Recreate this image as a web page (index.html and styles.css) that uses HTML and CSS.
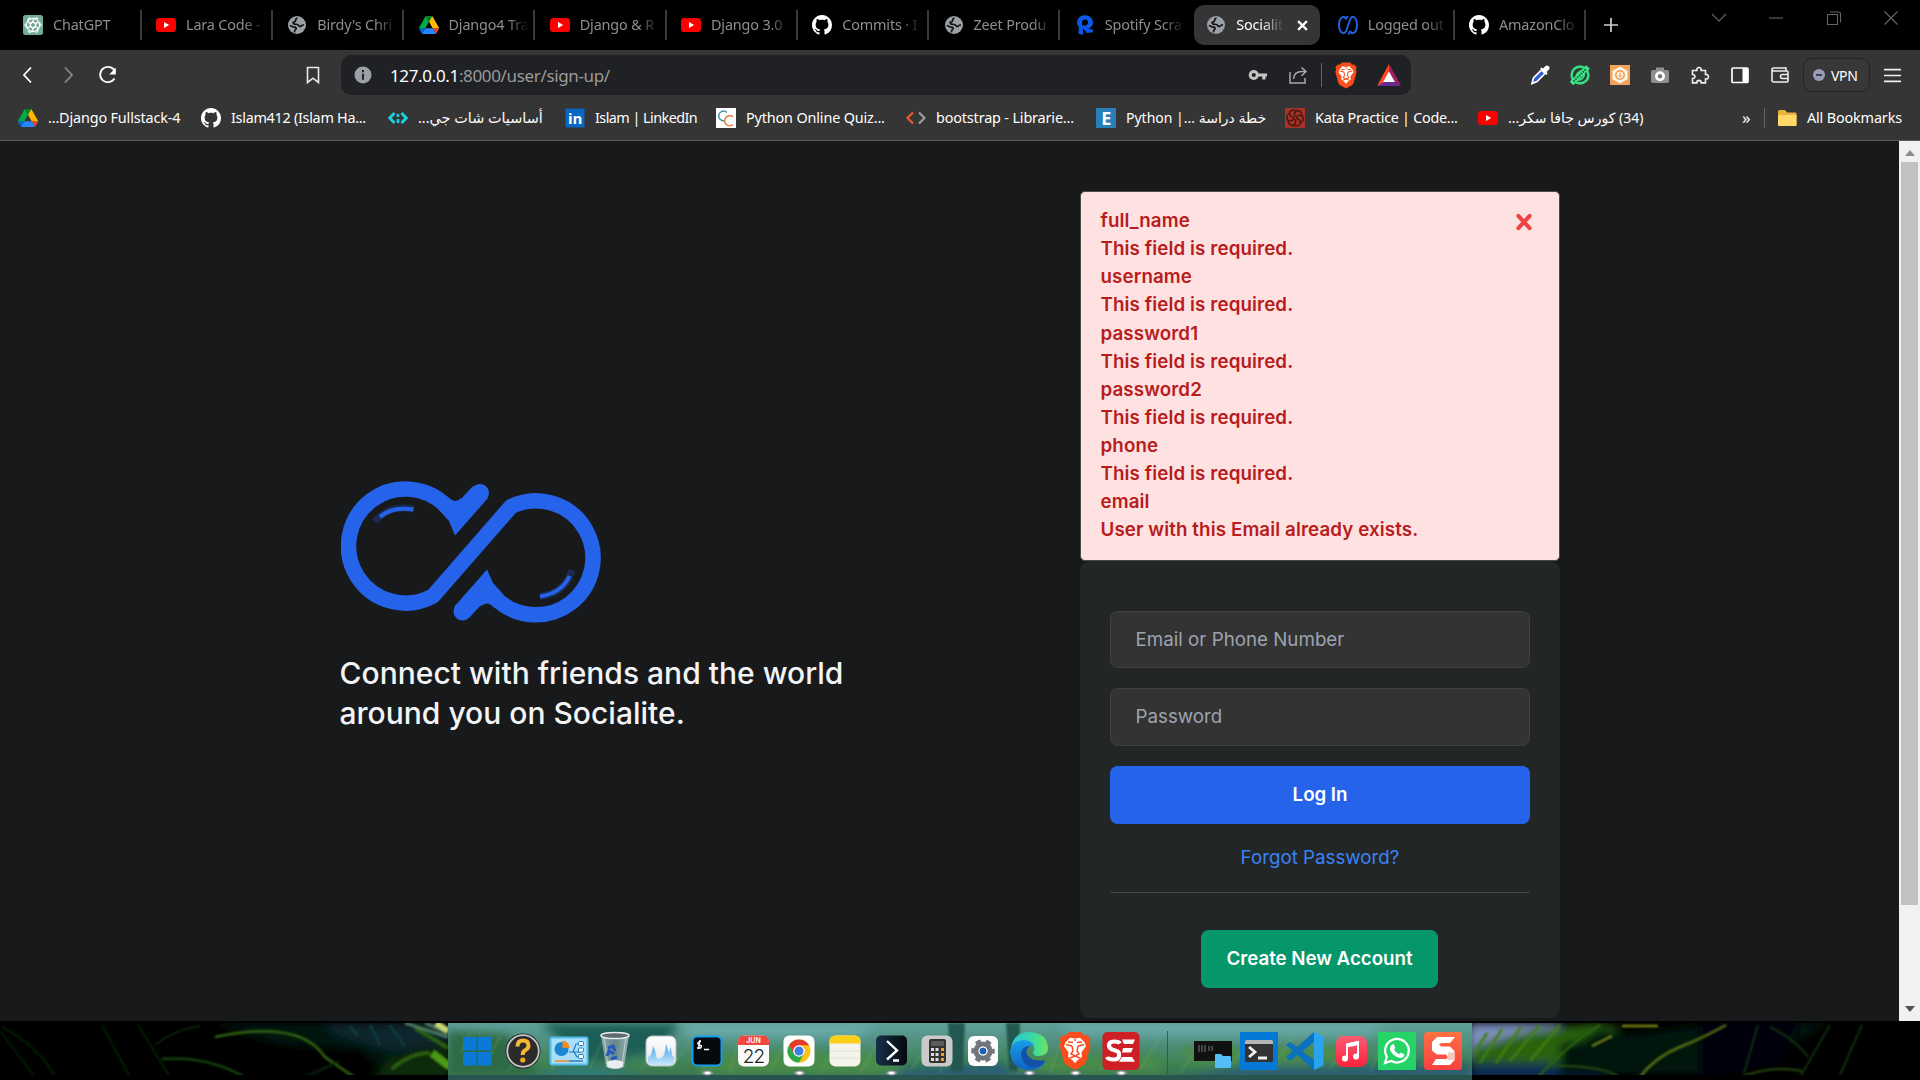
FILE: index.html
```html
<!DOCTYPE html>
<html lang="en">
<head>
<meta charset="utf-8">
<title>Socialite</title>
<link rel="stylesheet" href="styles.css">
</head>
<body>
<svg class="defs" aria-hidden="true">
  <defs>
    <linearGradient id="edgeA" x1="0" y1="0" x2="1" y2="0"><stop offset="0" stop-color="#2bc6d8"/><stop offset=".6" stop-color="#3ad9a4"/><stop offset="1" stop-color="#6ee65a"/></linearGradient>
    <linearGradient id="edgeB" x1="0" y1="0" x2="0" y2="1"><stop offset="0" stop-color="#1aa0e8"/><stop offset="1" stop-color="#0f62c4"/></linearGradient>
    <linearGradient id="musicG" x1="0" y1="0" x2="0" y2="1"><stop offset="0" stop-color="#fb5c74"/><stop offset="1" stop-color="#fa233b"/></linearGradient>
    <linearGradient id="snagG" x1="0" y1="0" x2="0" y2="1"><stop offset="0" stop-color="#ff7043"/><stop offset="1" stop-color="#f9403f"/></linearGradient>
    <linearGradient id="psG" x1="0" y1="0" x2="1" y2="0"><stop offset="0" stop-color="#16304a"/><stop offset="1" stop-color="#05090f"/></linearGradient>
    <linearGradient id="binG" x1="0" y1="0" x2="1" y2="0"><stop offset="0" stop-color="#b8c4c8"/><stop offset=".5" stop-color="#7d939c"/><stop offset="1" stop-color="#c3ced2"/></linearGradient>
    <linearGradient id="lightG" x1="0" y1="0" x2="0" y2="1"><stop offset="0" stop-color="#fff"/><stop offset="1" stop-color="#dfe3e6"/></linearGradient>
    <linearGradient id="waveG" x1="0" y1="0" x2="0" y2="1"><stop offset="0" stop-color="#3ea4ec"/><stop offset="1" stop-color="#c9e6fa"/></linearGradient>
  </defs>
  <symbol id="i-gpt" viewBox="0 0 20 20"><rect width="20" height="20" rx="2.5" fill="#74aa9c"/><g fill="none" stroke="#fff" stroke-width="1.15"><path id="petal" d="M10 7.1 12.6 8.6V12.4M10 7.1V5.3a3 3 0 0 1 5.2-1.4"/><use href="#petal" transform="rotate(60 10 10)"/><use href="#petal" transform="rotate(120 10 10)"/><use href="#petal" transform="rotate(180 10 10)"/><use href="#petal" transform="rotate(240 10 10)"/><use href="#petal" transform="rotate(300 10 10)"/><circle cx="10" cy="10" r="6.6"/></g></symbol>
  <symbol id="i-yt" viewBox="0 0 20 20"><rect y="3" width="20" height="14" rx="3.6" fill="#f00"/><path d="M8 7l5.2 3L8 13z" fill="#fff"/></symbol>
  <symbol id="i-globe" viewBox="0 0 20 20"><circle cx="10" cy="10" r="9" fill="#9aa0a6"/><path d="M10.500 3q-2 .5-1.800 2.300-.2 1.700-2.500 2 .2 1.900 2.300 2 2.300-.3 3.200 1.200.7 1.300 2.300.9.800-1.800 3-1.300" stroke="#111" stroke-width="1.700" fill="none"/><path d="M2.800 10.500q1.700.3 3 1.300 1.800.2 3 .8.900 1.300-.6 2.200-.9 1-.6 2.600" stroke="#111" stroke-width="1.700" fill="none"/></symbol>
  <symbol id="i-drive" viewBox="0 0 87.3 78"><path fill="#0066da" d="m6.600 66.850 3.850 6.650c.8 1.400 1.950 2.500 3.300 3.300l13.750-23.800h-27.500c0 1.550.4 3.100 1.200 4.500z"/><path fill="#00ac47" d="m43.650 25-13.750-23.800c-1.350.8-2.500 1.900-3.300 3.300l-25.400 44a9.060 9.060 0 0 0-1.200 4.500h27.500z"/><path fill="#ea4335" d="m73.550 76.800c1.350-.8 2.500-1.900 3.300-3.300l1.600-2.750 7.650-13.250c.8-1.400 1.200-2.950 1.200-4.500h-27.500l5.850 11.500z"/><path fill="#00832d" d="m43.650 25 13.750-23.800c-1.350-.8-2.900-1.200-4.500-1.200h-18.500c-1.600 0-3.150.45-4.500 1.200z"/><path fill="#2684fc" d="m59.800 53h-32.300l-13.750 23.800c1.350.8 2.900 1.200 4.500 1.200h50.800c1.600 0 3.150-.45 4.500-1.200z"/><path fill="#ffba00" d="m73.400 26.500-12.700-22c-.8-1.400-1.950-2.500-3.300-3.300l-13.750 23.800 16.150 28h27.450c0-1.550-.4-3.100-1.200-4.500z"/></symbol>
  <symbol id="i-gh" viewBox="0 0 16 16"><path fill="#fff" d="M8 0C3.580 0 0 3.580 0 8c0 3.540 2.290 6.530 5.470 7.590.4.07.55-.17.55-.38 0-.19-.01-.82-.01-1.490-2.010.37-2.530-.49-2.690-.94-.09-.23-.48-.94-.82-1.130-.28-.15-.68-.52-.01-.53.63-.01 1.080.58 1.230.82.72 1.210 1.870.87 2.330.66.07-.52.28-.87.51-1.070-1.780-.2-3.640-.89-3.640-3.950 0-.87.31-1.590.82-2.150-.08-.2-.36-1.020.08-2.120 0 0 .67-.21 2.200.82.64-.18 1.320-.27 2-.27s1.360.09 2 .27c1.530-1.040 2.200-.82 2.200-.82.44 1.100.16 1.920.08 2.120.51.56.82 1.270.82 2.150 0 3.070-1.870 3.750-3.650 3.950.29.25.54.73.54 1.480 0 1.070-.01 1.930-.01 2.200 0 .21.15.46.55.38A8.010 8.010 0 0 0 16 8c0-4.420-3.580-8-8-8z"/></symbol>
  <symbol id="i-r" viewBox="0 0 20 20"><path d="M2 7.600A8 7.300 0 1 1 13.500 14l4.500.5v2.700L12 18l-4-4.500v6.500l-4.500-1.500L3.800 12Q2 10.500 2 7.600zM7 7.500v3h3.500a3 3 0 1 0-3.500-3z" fill="#0b57e8" fill-rule="evenodd"/></symbol>
  <symbol id="i-loop" viewBox="20 18 264 148"><g fill="none" stroke="#2563eb" stroke-width="15.500" stroke-linejoin="round"><path d="M127.500 48.600A57 57 0 1 0 112 136L190 46.600A57 57 0 1 1 172.500 135.800"/></g><g fill="#2563eb"><path d="M134 42.700 140 39 152 26 167 38 134 75.500 128 61 118 50 127 38z"/><path d="M166 141.700 160 145 148 158 133 147 166 109.500 172 123 182 134 173 146z"/><path d="M126 36q8 9 14 2v12h-12zM174 148.500q-8-9-14-2v-12h12z"/></g><path d="M159 33 150 43M141.500 151.500 150 142" stroke="#2563eb" stroke-width="18" stroke-linecap="round"/></symbol>
  <symbol id="i-brave" viewBox="0 0 32 38"><path fill="#fb4c1c" d="M10 0h12l3 3.500 3-.5 3.500 4-1.200 3L31.500 14 27 30q-.6 1.600-2 2.700L16 38l-9-5.300Q5.600 31.600 5 30L.5 14l1.200-4L.5 7 4 3l3 .5z"/><path fill="#fff" d="M16 6.500l5-.8 4.500 4.500 1.500 4-4.500 6 .5 4.500-4.500 3.500-2.500 3-2.500-3L9 24.700l.5-4.500-4.500-6 1.500-4L11 5.700z"/><path fill="none" stroke="#fb4c1c" stroke-width="1.500" d="M7 12.500l6 1.500M25 12.500l-6 1.500M13 14l1 5-2 3 4 2 4-2-2-3 1-5M16 9v-2M11 26l5-2 5 2M9 10l5 .5M23 10l-5 .5"/></symbol>
</svg>

<header class="tabs">
  <div class="tab first"><svg class="ti"><use href="#i-gpt"/></svg><span>ChatGPT</span></div>
  <div class="tab"><svg class="ti"><use href="#i-yt"/></svg><span>Lara Code -</span></div>
  <div class="tab"><svg class="ti"><use href="#i-globe"/></svg><span>Birdy's Chri</span></div>
  <div class="tab"><svg class="ti"><use href="#i-drive"/></svg><span>Django4 Tra</span></div>
  <div class="tab"><svg class="ti"><use href="#i-yt"/></svg><span>Django &amp; R</span></div>
  <div class="tab"><svg class="ti"><use href="#i-yt"/></svg><span>Django 3.0</span></div>
  <div class="tab"><svg class="ti"><use href="#i-gh"/></svg><span>Commits · I</span></div>
  <div class="tab"><svg class="ti"><use href="#i-globe"/></svg><span>Zeet Produ</span></div>
  <div class="tab nosep"><svg class="ti"><use href="#i-r"/></svg><span>Spotify Scra</span></div>
  <div class="tab active"><svg class="ti"><use href="#i-globe"/></svg><span>Socialit</span><svg class="tx" viewBox="0 0 10 10"><path d="M1 1l8 8M9 1L1 9" stroke="#fff" stroke-width="2"/></svg></div>
  <div class="tab"><svg class="ti" viewBox="0 0 20 20"><g fill="none" stroke="#2563eb" stroke-width="1.900"><path d="M8 4Q6.500 1 4.500 2 1 4 1 10t3.500 8q2.300 1 4-3L12 5q1.500-4 3.800-3Q19 4 19 10t-3.300 8q-2.200 1-3.700-2M8 4l1.500-3.200M12 16l-1.500 3.500"/></g></svg><span>Logged out</span></div>
  <div class="tab"><svg class="ti"><use href="#i-gh"/></svg><span>AmazonClo</span></div>
  <svg class="plus" viewBox="0 0 14 14"><path d="M7 0v14M0 7h14" stroke="#d0d0d0" stroke-width="1.700"/></svg>
  <div class="win">
    <svg viewBox="0 0 16 16"><path d="M1 4l7 7 7-7" /></svg>
    <svg viewBox="0 0 16 16"><path d="M1 8h14"/></svg>
    <svg viewBox="0 0 16 16"><path d="M1.500 4.500h10v10h-10zM4 2h8.500Q14.500 2 14.500 4v8.500"/></svg>
    <svg viewBox="0 0 16 16"><path d="M1.500 1.500l13 13M14.500 1.500l-13 13"/></svg>
  </div>
</header>

<nav class="toolbar">
  <svg class="nav back" viewBox="0 0 20 20"><path d="M13 2.500 6 10l7 7.500" stroke="#fff" stroke-width="1.800" fill="none"/></svg>
  <svg class="nav" viewBox="0 0 20 20"><path d="M7 2.500 14 10l-7 7.500" stroke="#8a8a8a" stroke-width="1.800" fill="none"/></svg>
  <svg class="nav" viewBox="0 0 20 20"><path d="M16.500 13.500A7.700 7.700 0 1 1 17 6.500" stroke="#fff" stroke-width="1.800" fill="none"/><path d="M17.800 2.500v7h-6.500z" fill="#fff"/></svg>
  <svg class="nav mark" viewBox="0 0 20 20"><path d="M4.500 2.500h11v15L10 13.200l-5.500 4.300z" stroke="#e8e8e8" stroke-width="1.600" fill="none"/></svg>
  <div class="addr">
    <svg class="info" viewBox="0 0 18 18"><circle cx="9" cy="9" r="8.500" fill="#9aa0a6"/><path d="M9 4v2.200M9 7.700v6" stroke="#202124" stroke-width="2"/></svg>
    <span class="url"><b>127.0.0.1</b>:8000/user/sign-up/</span>
    <svg class="ab" viewBox="0 0 20 20"><circle cx="5.800" cy="10" r="3.600" fill="none" stroke="#c4c4c4" stroke-width="3"/><path d="M9 8.500h10v3h-1.500v3h-3.200v-3H9z" fill="#c4c4c4"/></svg>
    <svg class="ab" viewBox="0 0 20 20"><path d="M2 7v11h15v-5M5.500 14Q6 6.500 14 6.500h3M13.500 2.500l4.500 4-4.500 4.200" fill="none" stroke="#a8a8a8" stroke-width="1.500"/></svg>
    <i class="vbar"></i>
    <svg class="lion"><use href="#i-brave"/></svg>
    <svg class="bat" viewBox="0 0 24 22"><path d="M12 0v0l12 22-8-9z" fill="#9e1f63"/><path d="M0 22h24l-6-4H6z" fill="#662d91"/><path d="M12 0 0 22l7-4 5-10z" fill="#ff4724"/><path d="M12 0l12 22-6-4-6-10z" fill="#9e1f63"/><path d="M12 7.500l6 10.500H6z" fill="#fff"/></svg>
  </div>
  <div class="exts">
    <svg viewBox="0 0 20 20"><path d="M2 18.500 3.500 13l8-8 3.500 3.500-8 8z" fill="#2f5bd8" stroke="#fff" stroke-width="1.700"/><path d="M10 3.500l6.500 6.500 1.200-1.500-1.200-1.500 2.500-2.500a2.500 2.500 0 0 0-3.500-3.500L13 3.500l-1.500-1z" fill="#fff"/></svg>
    <svg viewBox="0 0 20 20"><circle cx="10" cy="10" r="8.400" fill="#2c3a33" stroke="#35dd80" stroke-width="2.600"/><path d="M6 12Q7 6.500 13 5.500M8 15q5 0 6.500-6" stroke="#35dd80" stroke-width="2" fill="none"/><path d="M1.500 18.500 18 2" stroke="#46e58c" stroke-width="5"/><path d="M3.500 16.500 16.500 3.500" stroke="#0f6a3c" stroke-width="2" stroke-dasharray="1.600 1"/></svg>
    <svg viewBox="0 0 20 20"><rect width="20" height="20" fill="#f2a25c"/><path d="M10 1.500l7.500 4.200v8.600L10 18.500l-7.500-4.200V5.700z" fill="#fff3e4"/><circle cx="10" cy="10" r="4.200" fill="none" stroke="#ee9a4c" stroke-width="1.500"/><path d="M10 7.500v4.500M8.500 10.500l1.500 1.700 1.500-1.700" stroke="#ee9a4c" fill="none"/></svg>
    <svg viewBox="0 0 20 20"><rect x="1" y="5" width="18" height="13" rx="2" fill="#8f8f8f"/><path d="M6 5V2.500h8V5z" fill="#8f8f8f"/><circle cx="10" cy="11.200" r="5" fill="#fff"/><circle cx="10" cy="11.200" r="2.200" fill="#777"/></svg>
    <svg viewBox="0 0 20 20"><path d="M2.500 5.500h4.300a2.300 2.300 0 1 1 4.400 0h4.300v4a2.300 2.300 0 1 1 0 4.400v4h-4.300q0-2.500-2.200-2.500t-2.200 2.500H2.500v-4.400q2.400 0 2.400-2t-2.400-2z" fill="none" stroke="#f0f0f0" stroke-width="1.600"/></svg>
    <svg viewBox="0 0 20 20"><rect x="2" y="3" width="16" height="14.500" rx="1" fill="none" stroke="#fff" stroke-width="1.700"/><path d="M12.500 3h5.500v14.500h-5.500z" fill="#fff"/></svg>
    <svg viewBox="0 0 20 20"><path d="M16 6V3H4Q2 3 2 4.500V15q0 2 2 2h13q1 0 1-1V7q0-1-1-1H3.500Q2 6 2 4.500M18 9.500h-5.500a2 2 0 0 0 0 4H18" fill="none" stroke="#eee" stroke-width="1.600"/></svg>
  </div>
  <div class="vpn"><svg viewBox="0 0 12 12"><circle cx="6" cy="6" r="6" fill="#9a9bb5"/><path d="M3 6h6" stroke="#2a2a3a" stroke-width="1.600"/></svg><span>VPN</span></div>
  <svg class="burger" viewBox="0 0 16 14"><path d="M0 1.500h16M0 7h16M0 12.500h16" stroke="#f0f0f0" stroke-width="1.600"/></svg>
</nav>

<nav class="marks">
  <div class="bm"><svg class="bi"><use href="#i-drive"/></svg><span class="t1">...Django Fullstack-4</span></div>
  <div class="bm"><svg class="bi"><use href="#i-gh"/></svg><span class="t2">Islam412 (Islam Ha...</span></div>
  <div class="bm"><svg class="bi" viewBox="0 0 20 20"><path d="M6.500 5 1.800 10l4.700 5M13.500 5l4.700 5-4.700 5" fill="none" stroke="#17d3dd" stroke-width="2.800"/><path d="M10 6v3M10 11v4" stroke="#17d3dd" stroke-width="2.600"/></svg><span class="t3" dir="rtl">أساسيات شات جي...</span></div>
  <div class="bm"><svg class="bi" viewBox="0 0 20 20"><rect x=".5" y=".5" width="19" height="19" rx="1" fill="#0a66c2"/><text x="3" y="16" font-family="Open Sans, sans-serif" font-weight="700" font-size="15" fill="#fff">in</text></svg><span class="t4">Islam | LinkedIn</span></div>
  <div class="bm"><svg class="bi" viewBox="0 0 20 20"><rect width="20" height="20" fill="#fff"/><path d="M11 4.500A4.800 4.800 0 1 0 9 12.500" stroke="#3a98a0" stroke-width="1.400" fill="none"/><path d="M17 9A5 5 0 1 0 17 16.500" stroke="#e0702a" stroke-width="1.400" fill="none"/></svg><span class="t5">Python Online Quiz...</span></div>
  <div class="bm"><svg class="bi" viewBox="0 0 20 20"><path d="M7 4.500 1.500 10 7 15.500" stroke="#f05a2a" stroke-width="2.200" fill="none"/><path d="M13 4.500 18.500 10 13 15.500" stroke="#9a9a9a" stroke-width="2.200" fill="none"/></svg><span class="t6">bootstrap - Librarie...</span></div>
  <div class="bm"><svg class="bi" viewBox="0 0 20 20"><rect width="20" height="20" fill="#2980b9"/><text x="5.300" y="16.500" font-family="Open Sans, sans-serif" font-weight="700" font-size="18" fill="#fff">E</text></svg><span class="t7">Python |... خطة دراسة</span></div>
  <div class="bm"><svg class="bi" viewBox="0 0 20 20"><rect width="20" height="20" fill="#a83226"/><g fill="none" stroke="#4a1813" stroke-width="1.500"><path id="swirl" d="M10 9Q8 5 12 2.500Q17 3 16.500 7"/><use href="#swirl" transform="rotate(60 10 10)"/><use href="#swirl" transform="rotate(120 10 10)"/><use href="#swirl" transform="rotate(180 10 10)"/><use href="#swirl" transform="rotate(240 10 10)"/><use href="#swirl" transform="rotate(300 10 10)"/></g></svg><span class="t8">Kata Practice | Code...</span></div>
  <div class="bm"><svg class="bi"><use href="#i-yt"/></svg><span class="t9" dir="rtl">(34) كورس جافا سكر...</span></div>
  <div class="more">»</div>
  <div class="all"><svg class="bi" viewBox="0 0 20 18"><path d="M1 2.500Q1 1 2.500 1H8l2 2.500h8.500Q19.500 3.500 19.500 5v11q0 1-1 1h-16q-1.500 0-1.500-1z" fill="#e8b33a"/><path d="M1 6h18.500v10q0 1-1 1h-16Q1 17 1 16z" fill="#ffd868"/></svg><span class="t10">All Bookmarks</span></div>
</nav>

<div class="view">
  <main class="page">
    <section class="intro">
      <svg class="logo" viewBox="18 20 264.300 145"><use href="#i-loop" x="20" y="18" width="264" height="148"/><g fill="none" stroke="#2563eb" stroke-linecap="butt"><path d="M54 62Q67 44 92.500 49" stroke-width="7" opacity=".25"/><path d="M59 57Q71 46 92.500 49.500" stroke-width="4"/><path d="M251 110Q245 133 219 136.500" stroke-width="7" opacity=".25"/><path d="M248.500 116Q241 133 219 136.500" stroke-width="4"/></g></svg>
      <p>Connect with friends and the world<br>around you on Socialite.</p>
    </section>
    <section class="side">
      <div class="alert">
        <div class="errors">
          <div>full_name</div><div>This field is required.</div>
          <div>username</div><div>This field is required.</div>
          <div>password1</div><div>This field is required.</div>
          <div>password2</div><div>This field is required.</div>
          <div>phone</div><div>This field is required.</div>
          <div>email</div><div>User with this Email already exists.</div>
        </div>
        <svg class="close" viewBox="0 0 16 16"><path d="M3 2.500l10 11M13 2.500l-10 11" stroke="#ef4444" stroke-width="3.600" stroke-linecap="round"/></svg>
      </div>
      <form class="card">
        <div class="field">Email or Phone Number</div>
        <div class="field second">Password</div>
        <div class="btn login">Log In</div>
        <div class="forgot">Forgot Password?</div>
        <hr>
        <div class="btn create">Create New Account</div>
      </form>
    </section>
  </main>
  <aside class="scroll">
    <svg viewBox="0 0 10 6"><path d="M0 6 5 0l5 6z" fill="#8b8b8b"/></svg>
    <div class="thumb"></div>
    <svg viewBox="0 0 10 6"><path d="M0 0h10L5 6z" fill="#505050"/></svg>
  </aside>
</div>

<footer class="desk">
  <svg class="wall" viewBox="0 0 1920 57" preserveAspectRatio="none">
    <defs>
      <filter id="soft" x="-5%" y="-20%" width="110%" height="140%"><feGaussianBlur stdDeviation="5"/></filter>
      <filter id="fine" x="-5%" y="-20%" width="110%" height="140%"><feGaussianBlur stdDeviation="1"/></filter>
      <linearGradient id="dg" x1="0" y1="0" x2="0" y2="1"><stop offset="0" stop-color="#5f9f9b"/><stop offset=".4" stop-color="#4d8d79"/><stop offset=".75" stop-color="#3d8150"/><stop offset="1" stop-color="#3a7150"/></linearGradient>
    </defs>
    <rect width="1920" height="57" fill="#000"/>
    <g filter="url(#soft)">
      <path d="M210 0h240v30l-60 22-30-25-80-5z" fill="#04180f"/>
      <path d="M320 0h130v20l-60 8-50-14z" fill="#08262e"/>
      <path d="M370 57 390 35l60-12v34z" fill="#082a07"/>
      <path d="M1470 0h95l-30 16-70 20z" fill="#7d8fbd"/>
      <path d="M1470 24 1530 8l70-8 20 5-50 35-40 5-60-5z" fill="#2c640d"/>
      <path d="M1470 40h80l60 17h-140z" fill="#0a2a52"/>
      <path d="M1560 20 1720 0h110l-90 50-180 4z" fill="#041407"/>
      <path d="M1560 30l40-25 40 10-50 40z" fill="#03140f"/>
      <path d="M1700 0h100l-20 40-80 14z" fill="#02040e"/>
    </g>
    <g fill="none" filter="url(#fine)">
      <path d="M0 8 35 54M2 4 Q40 24 55 54M102 2 130 54M138 2 170 54" stroke="#062406" stroke-width="2"/>
      <path d="M215 14Q300-4 325 34L354 54" stroke="#35680e" stroke-width="2.500"/>
      <path d="M162 36Q205 32 245 54" stroke="#17450b" stroke-width="2.500"/>
      <path d="M155 22Q175 6 200 3M305 54 340 38" stroke="#0a260a" stroke-width="2"/>
      <path d="M392 46Q410 30 430 30M415 5l33 20" stroke="#2a6110" stroke-width="4"/>
      <path d="M432 30l18 14" stroke="#4c9a18" stroke-width="8"/>
      <path d="M405 0l43 14M425 0l23 10" stroke="#4f7d5e" stroke-width="3"/>
      <path d="M370 2l10 20M390 2l15 22M350 3l8 10" stroke="#123a36" stroke-width="3"/>
      <path d="M436 0l12 8" stroke="#c8d870" stroke-width="6"/>
      <path d="M1480 40l22-34M1496 40l25-36M1510 38l30-36M1530 38l30-36M1475 30l12-20" stroke="#3f7f16" stroke-width="2.500"/>
      <path d="M1538 54Q1570 20 1600 2" stroke="#2c6410" stroke-width="2.500"/>
      <path d="M1640 54Q1655 34 1680 24T1726 2" stroke="#5b7414" stroke-width="2.500"/>
      <path d="M1622 3h36M1592 23l20-10" stroke="#7d8816" stroke-width="2.500"/>
      <path d="M1758 2 1744 50M1830 2 1800 54M1862 2 1840 52M1770 4Q1795 16 1808 34" stroke="#0a2a10" stroke-width="2.500"/>
      <path d="M1742 54Q1770 42 1802 48M1555 43Q1600 42 1620 54" stroke="#284c0d" stroke-width="2"/>
    </g>
    <rect x="448" width="1024" height="57" fill="url(#dg)"/>
    <svg x="448" width="1024" height="57" viewBox="448 0 1024 57">
    <g filter="url(#soft)">
      <path d="M540 0h140l-22 30-70 10z" fill="#1f5d55"/>
      <path d="M448 8l60 4 30 40h-90z" fill="#2d6a45"/>
      <path d="M530 57q40-25 120 0z" fill="#2e7a80"/>
      <path d="M900 45l100-6 60 18H880zM1160 57l80-14h100l132-4v18z" fill="#2b5f72"/>
      <path d="M680 0h200l-20 14H690zM1060 0h330l-20 12h-300z" fill="#6ba9a6"/>
      <path d="M700 30h200v20H700zM1010 34h150v14h-150zM1180 24h200l-40 16h-150z" fill="#4a8c4a"/>
    </g>
    </svg>
    <g fill="#24594f" filter="url(#fine)"><path d="M948 0h17l-2 48h-12zM1006 0h14l-2 48h-9z"/></g>
    <g fill="none" stroke="#7bb26b" stroke-width="2" opacity=".25" filter="url(#fine)"><path d="M460 30l10-20M486 40l14-26M508 48l20-30M550 48l22-30M590 45l14-30M640 48l20-28M670 46l26-34M700 50l20-30M730 50l8-32M770 48l20-36M820 50l16-28M860 50l20-34M910 48l18-26M940 50l10-30M975 46l10-30M1050 50l14-40M1100 48l16-26M1140 46l20-32M1180 50l24-34M1230 44l22-30M1270 48l24-36M1330 46l24-34M1370 48l20-40M1420 44l30-36M1450 46l16-30"/></g>
    <path d="M0 52h448v5H0zM1472 52h448v5h-448z" fill="#000"/>
    <path d="M448 52h1024v5H448z" fill="#27544f"/>
  </svg>
  <div class="dock">
    <div class="slot"><svg viewBox="0 0 40 40"><g fill="#0b79d8"><path d="M6 6h13.500v13.500H6zM21 6h13.500v13.500H21zM6 21h13.500v13.500H6zM21 21h13.500v13.500H21z"/></g></svg></div>
    <div class="slot"><svg viewBox="0 0 40 40"><circle cx="20" cy="20" r="17.500" fill="#1c1c1c"/><circle cx="20" cy="20" r="15.800" fill="#2b2b2b" stroke="#c9c9c9" stroke-width="1.800"/><path d="M14.500 15.500q0-6 5.500-6t5.500 5q0 3-3 4.500T19.800 24" fill="none" stroke="#f7b733" stroke-width="4"/><circle cx="19.800" cy="29" r="2.600" fill="#f7a823"/></svg></div>
    <div class="slot"><svg viewBox="0 0 40 40"><rect x="1.500" y="6.500" width="37" height="27" rx="1.500" fill="#a9dff8" stroke="#52bdea" stroke-width="2"/><circle cx="12.500" cy="18" r="7" fill="#1c86d1"/><path d="M13.500 17V9.500a7.500 7.500 0 0 1 7 7.500z" fill="#f28a1c"/><path d="M20 21h4l3-8h3M24 21h7M25 21l3 5h3" stroke="#2b6fae" stroke-width="1.200" fill="none"/><g fill="#fff" stroke="#1c7fc8"><rect x="29.500" y="10.500" width="5" height="4" rx="1"/><rect x="29.500" y="17" width="5" height="4" rx="1"/><rect x="29.500" y="23.500" width="5" height="4" rx="1"/></g><path d="M6 30h14" stroke="#e88a2c" stroke-width="1.500"/><path d="M20 30h14" stroke="#2a7cc0" stroke-width="1.500"/></svg></div>
    <div class="slot"><svg viewBox="0 0 40 40"><path d="M6 4 11 36q9 4.500 18 0L34 4z" fill="url(#binG)" opacity=".75"/><path d="M9 6 13 34M31 6 27 34" stroke="#dfe6e8" opacity=".6"/><ellipse cx="20" cy="4.500" rx="14" ry="3" fill="#5b6b70" stroke="#e6eaeb" stroke-width="1.500"/><path d="M11.500 31q8-4 17 0l-1 5q-7 3.500-15 0z" fill="#e9eef0"/><path d="M13 17l5-2 2 5M12 25l2-5 5 3M22 26l-6 2" stroke="#2458c0" stroke-width="3" fill="none"/></svg></div>
    <div class="slot"><svg viewBox="0 0 40 40"><rect x="5" y="5" width="30" height="30" rx="6" fill="url(#lightG)" stroke="#b4bcc2"/><path d="M7 26q4-1 5-11 2 3 3 9t5 3q4-1 5-14 2 6 3 9 1-5 2-5l1 7q1 2 2 2v6q0 2-3 2H10q-3 0-3-3z" fill="url(#waveG)"/></svg></div>
    <div class="slot on"><svg viewBox="0 0 40 40"><rect x="5.500" y="5.500" width="29" height="29" rx="5" fill="#06090d" stroke="#129cf0" stroke-width="2"/><path d="M14 10.500q-3.500 0-3 2t2.500 2 0 2.500h-3.500M13 9l-1.500 9M17 18.500h5" stroke="#fff" stroke-width="1.400" fill="none"/></svg></div>
    <div class="slot"><svg viewBox="0 0 40 40"><rect x="5" y="4.500" width="31" height="31" rx="6" fill="#fafafa"/><path d="M5 14v-3.500q0-6 6-6h19q6 0 6 6V14z" fill="#f2473f"/><text x="20.500" y="12" text-anchor="middle" font-family="Inter, sans-serif" font-weight="600" font-size="7" fill="#fff">JUN</text><text x="20.500" y="31.500" text-anchor="middle" font-family="Inter, sans-serif" font-weight="300" font-size="19" letter-spacing="-1" fill="#222">22</text></svg></div>
    <div class="slot on"><svg viewBox="0 0 40 40"><rect x="4.500" y="4.500" width="31" height="31" rx="6" fill="#fff"/><circle cx="20" cy="20" r="11.500" fill="#fbc116"/><path d="M10.040 14.250A11.500 11.500 0 0 1 29.960 14.250H20L15 22.900z" fill="#e33b2e"/><path d="M10.040 14.250A11.500 11.500 0 0 0 20 31.500L25 22.900 20 25.750 15 22.900z" fill="#2da94f"/><circle cx="20" cy="20" r="5.800" fill="#fff"/><circle cx="20" cy="20" r="4.500" fill="#3f7de8"/></svg></div>
    <div class="slot"><svg viewBox="0 0 40 40"><rect x="4.500" y="4.500" width="31" height="31" rx="6" fill="#f4f3ec"/><path d="M4.500 12.500v-2q0-6 6-6h19q6 0 6 6v2z" fill="#fccf1b"/><path d="M5 20h30M5 27h30" stroke="#deddd5" stroke-width=".8"/></svg></div>
    <div class="slot on"><svg viewBox="0 0 40 40"><rect x="5" y="4.500" width="31" height="30" rx="5" fill="url(#psG)"/><path d="M16 10l10 9.500-10 9M22 29.500h6" fill="none" stroke="#fff" stroke-width="2.400"/></svg></div>
    <div class="slot"><svg viewBox="0 0 40 40"><rect x="4.500" y="4.500" width="31" height="31" rx="6" fill="#cacaca"/><rect x="12" y="8" width="17" height="24" rx="2" fill="#333"/><rect x="14" y="10" width="13" height="5" fill="#5c5c5c"/><g stroke-width="3" stroke-dasharray="3 2"><path d="M15.500 17v14M20 17v14" stroke="#ddd"/><path d="M25.500 17v14" stroke="#f79a2c"/></g></svg></div>
    <div class="slot"><svg viewBox="0 0 40 40"><rect x="5" y="5" width="30" height="30" rx="6" fill="#fbfbfb"/><circle cx="20" cy="20" r="7" fill="none" stroke="#70757c" stroke-width="5"/><circle cx="20" cy="20" r="10" fill="none" stroke="#70757c" stroke-width="3.500" stroke-dasharray="5.240 5.240" stroke-dashoffset="2.600"/><circle cx="20" cy="20" r="4" fill="#1d5fb4" stroke="#fff" stroke-width="1"/></svg></div>
    <div class="slot on"><svg viewBox="0 0 40 40"><path d="M2 18Q4 1 21 1q17 1 18 16 0 8-10 8-5 0-5-4 2-2 1-5-3-6-10-5Q5 12 2 18z" fill="url(#edgeA)"/><path d="M1 20Q3 10 14 9q9 0 11 6-8-2-10 6-1 9 7 13 8 2 14-4 0 0 0 2Q30 39 20 39 2 38 1 20z" fill="url(#edgeB)"/><path d="M12 21q3-7 9-6-6 4-2 10 5 6 17 4-4 9-15 7-9-4-9-15z" fill="#1152a8"/></svg></div>
    <div class="slot on"><svg viewBox="0 0 40 40"><use href="#i-brave" x="4" y="1" width="32" height="38"/></svg></div>
    <div class="slot on"><svg viewBox="0 0 40 40"><rect x="1.500" y="1" width="37" height="38" rx="5" fill="#cf1f26"/><path d="M19 12.500q-1-2-6-2-5 0-5 4 0 3.500 5.500 4.700T18 24.500q0 4-5 4-6 0-7-2.500" fill="none" stroke="#fff" stroke-width="4.200"/><path d="M21 8.500h13l-2 4.500h-9zM22 17h10l-2 4.500h-9zM21 26h10l3 4.800H18z" fill="#fff"/></svg></div>
    <div class="slot"><i class="dsep"></i></div>
    <div class="slot"><svg viewBox="0 0 40 40"><path d="M1 10h38v20H1z" fill="#111"/><path d="M6 14v7M9 14v7M12 14v7M16 15v5M19 15v5" stroke="#555" stroke-width="1.500"/><path d="M22 24q0-1 1-1h5l2 2h7q1 0 1 1v10q0 1-1 1H23q-1 0-1-1z" fill="#54bdf5"/></svg></div>
    <div class="slot"><svg viewBox="0 0 40 40"><path d="M1 1h38v38H1z" fill="#0577d4"/><rect x="6" y="9" width="28" height="22" rx="1.500" fill="#333"/><path d="M6 13v-2.500Q6 9 7.500 9h25q1.500 0 1.500 1.500V13z" fill="#b5b5b5"/><path d="M10 16l6 5-6 5M19 27h9" fill="none" stroke="#f0f0f0" stroke-width="2.800"/></svg></div>
    <div class="slot"><svg viewBox="0 0 40 40"><path d="M1 26 29 1v10L5 30zM1 14l4-3 24 18v10z" fill="#0c72c0"/><path d="M29 1 38.500 5.500v29L29 39z" fill="#2aa4f0"/></svg></div>
    <div class="slot"><svg viewBox="0 0 40 40"><rect x="5" y="5" width="31" height="31" rx="7" fill="url(#musicG)"/><path d="M16 27V13.500l11-2.500v14" fill="none" stroke="#fff" stroke-width="2"/><path d="M15.500 12.500 27.500 10v4l-12 2.500z" fill="#fff"/><circle cx="14" cy="27.500" r="3" fill="#fff"/><circle cx="25" cy="25.500" r="3" fill="#fff"/></svg></div>
    <div class="slot"><svg viewBox="0 0 40 40"><path d="M1 1h38v38H1z" fill="#25d366"/><path d="M8 32l1.800-6.300A11.800 11.800 0 1 1 14.200 30z" fill="none" stroke="#fff" stroke-width="2.300"/><path d="M15 13.500q1.500-1 2 0l1.200 3q0 1-1.200 2 1.500 3.300 5 4.700 1.300-1.700 2-1.500l3.200 1.600q.5 3.500-4 3.700-3.500-.2-7-3.500T13 17.300q.3-2.800 2-3.800z" fill="#fff"/></svg></div>
    <div class="slot"><svg viewBox="0 0 40 40"><rect x="1" y="1" width="38" height="38" rx="3.500" fill="url(#snagG)"/><path d="M14 6h18l-5 6h-9l-2 1.500 2 2h9l4.500 4.500v9L27 34H9l4-6h10l2-1.500-2-3H14l-5-4V11z" fill="#fff"/><path d="M25 21.500h6.500V29H25z" fill="#f6c9bd"/></svg></div>
  </div>
</footer>
</body>
</html>
```
FILE: styles.css
```css
* { box-sizing: border-box; }
body {
  margin: 0; width: 1920px; height: 1080px; overflow: hidden;
  display: flex; flex-direction: column; background: #000; color: #fff;
  font-family: "Noto Sans", "DejaVu Sans", sans-serif; font-size: 14.4px;
}
svg { display: block; flex: none; }
.defs { position: absolute; width: 0; height: 0; }

/* tab strip */
.tabs { height: 50px; display: flex; align-items: center; background: #000; flex: none; }
.tab {
  width: 131.25px; height: 30px; display: flex; align-items: center;
  padding-left: 14.500px; border-right: 2px solid #3a3a3a; color: #8e8e8e; flex: none;
}
.tab.first { width: 141.500px; padding-left: 23px; }
.tab.nosep { border-color: transparent; width: 134px; }
.ti { width: 20px; height: 20px; margin-right: 10px; }
.tab span {
  width: 84px; white-space: nowrap; letter-spacing: -.15px; margin-top: -2px;
  mask-image: linear-gradient(90deg, #000 58px, transparent 80px);
}
.tab.active { width: 126px; margin-right: 3px; height: 40px; border: 0; border-radius: 10px; background: #353535; color: #fff; padding-left: 12px; }
.tab.active span { width: 50px; mask-image: linear-gradient(90deg, #000 25px, transparent 48px); }
.tx { width: 11px; height: 11px; margin-left: 11px; }
.plus { width: 14px; height: 14px; margin-left: 18px; }
.win { display: flex; gap: 41.500px; margin: -14px 0 0 93px; }
.win svg { width: 16px; height: 16px; fill: none; stroke: #666; stroke-width: 1.100; }

/* toolbar */
.toolbar { height: 50px; display: flex; align-items: center; background: #353535; flex: none; }
.nav { width: 20px; height: 20px; margin-right: 20px; }
.back { margin-left: 18px; }
.mark { margin: 0 18px 0 165px; }
.addr { width: 1070px; height: 40px; border-radius: 10px; background: #202124; display: flex; align-items: center; padding-left: 13px; }
.info { width: 18px; height: 18px; }
.url { font-size: 17px; margin-left: 18px; color: #9a9a9a; flex: 1; letter-spacing: -.35px; }
.url b { color: #fff; font-weight: 400; }
.ab { width: 20px; height: 20px; margin-right: 20px; }
.vbar { width: 1.500px; height: 24px; background: #666; margin: 0 13px 0 -7px; }
.lion { width: 22px; height: 27px; margin-right: 20px; }
.bat { width: 24px; height: 22px; margin-right: 10px; }
.exts { display: flex; gap: 20px; margin-left: 119px; }
.exts svg { width: 20px; height: 20px; }
.vpn { width: 67px; height: 34px; margin-left: 13px; border: 1.500px solid #242424; border-radius: 9px; display: flex; align-items: center; padding-left: 9px; gap: 6px; font-size: 14px; background: #383838; letter-spacing: -.3px; }
.vpn svg { width: 12px; height: 12px; }
.burger { width: 17px; height: 15px; margin-left: 14px; }

/* bookmarks bar */
.marks {
  height: 41px; padding: 0 0 5px 18px; background: #353535; border-bottom: 1px solid #5c5c5c; flex: none;
  display: grid; grid-template-columns: 183px 187px 177px 151px 190px 190px 189px 193px 264px 22px 1fr;
  align-items: center; letter-spacing: -.15px;
}
.bm, .all { display: flex; align-items: center; gap: 10px; white-space: nowrap; }
.bi { width: 20px; height: 20px; }
.all { border-left: 1.500px solid #666; height: 20px; padding-left: 12px; }
.more { font-size: 17px; }
.t2, .t8 { letter-spacing: -.28px; }
.t3 { letter-spacing: 0; }
.t4 { letter-spacing: -.55px; }
.t7, .t9 { letter-spacing: 0; font-size: 14px; }

/* web page */
.view { height: 880px; display: flex; background: #18191b; flex: none; }
.page { width: 1899px; display: flex; font-family: Inter, sans-serif; font-size: 18.750px; line-height: 28.125px; }
.intro { width: 1080px; padding: 339px 0 0 338.500px; }
.logo { width: 264.300px; height: 145px; }
.intro p { margin: 28px 0 0 1px; font-size: 30px; line-height: 40px; font-weight: 500; letter-spacing: .01px; color: #f3f4f6; white-space: nowrap; }
.side { width: 480px; padding-top: 50px; }
.alert { height: 370px; background: #fee2e2; border: 1px solid #4a4a4a; border-radius: 5px; padding: 15px 26px 0 19.500px; display: flex; justify-content: space-between; color: #b91c1c; font-weight: 600; letter-spacing: .1px; }
.close { width: 18px; height: 18px; margin-top: 6px; }
.card { height: 457px; border-radius: 10px; background: #222627; padding: 50px 30px 30px; display: flex; flex-direction: column; }
.field { height: 57px; border: 1px solid #414141; border-radius: 7.500px; background: #333; color: #9ca3af; padding: 14px 24.500px; margin-bottom: 20px; flex: none; }
.field.second { height: 58px; }
.btn { height: 58px; border-radius: 7.500px; font-weight: 600; text-align: center; padding-top: 15px; color: #fff; letter-spacing: -.05px; flex: none; }
.login { background: #2563eb; }
.forgot { color: #3b82f6; text-align: center; margin-top: 20px; }
.card hr { width: 100%; border: 0; height: 1px; background: #464646; margin: 19.500px 0 37.500px; flex: none; }
.create { width: 237px; background: #059669; align-self: center; margin-right: 1px; }
.scroll { width: 21px; background: #f1f1f1; display: flex; flex-direction: column; align-items: center; padding: 9px 0 9px; }
.scroll svg { width: 10px; height: 6px; }
.thumb { width: 17px; height: 743px; background: #c1c1c1; margin: 6px 0 auto; }

/* desktop strip */
.desk { position: relative; height: 57px; margin-top: 2px; flex: none; }
.wall { position: absolute; inset: 0; width: 1920px; height: 57px; }
.dock { position: relative; display: flex; padding: 8px 6px 0; margin-left: 448px; width: 1024px; }
.slot { width: 46px; height: 49px; display: flex; flex-direction: column; align-items: center; }
.slot svg { width: 40px; height: 40px; }
.slot.on::after { content: ""; width: 13px; height: 6px; margin-top: -1px; border-radius: 50%; background: radial-gradient(closest-side, #fff 25%, #c9a6d8aa 60%, transparent); }
.dsep { width: 1px; height: 43px; background: #2d5f5a; }
```
